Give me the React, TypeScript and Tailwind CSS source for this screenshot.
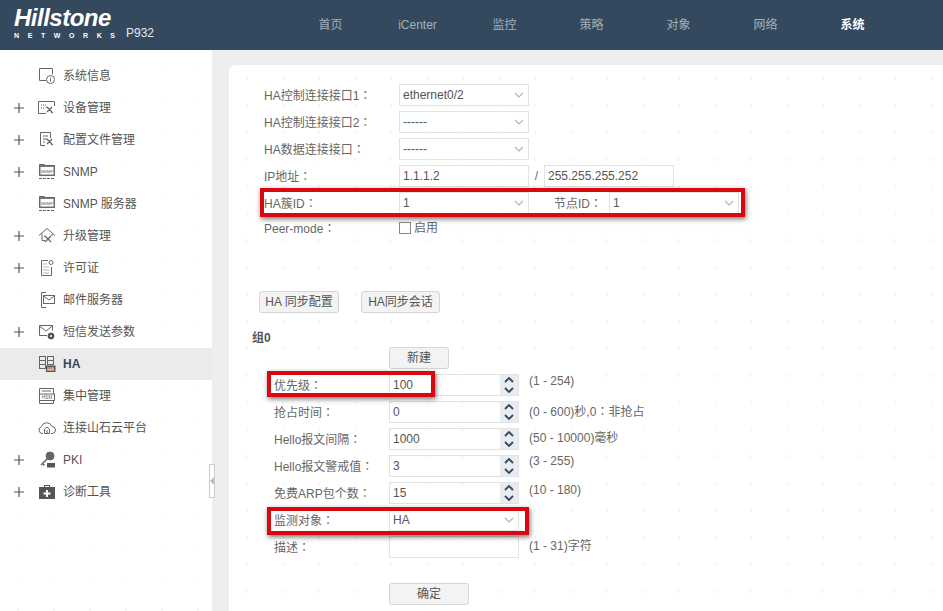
import type { ReactNode } from "react";

const cjk = "font-['Liberation_Sans','Noto_Sans_CJK_SC',sans-serif]";

const Ico = ({ children }: { children: ReactNode }) => (
  <svg width="18" height="18" viewBox="0 0 18 18" fill="none" stroke="#666" strokeWidth="1">
    {children}
  </svg>
);

const Tools = () => (
  <path d="M9 13l5-5M9 8l5 5M8 8l2 1M13 13l2 1" strokeWidth="1.3" />
);

const SnmpIcon = () => (
  <Ico>
    <path d="M1.5 1.500h5l1 1h9v10h-15z" fill="#777" />
    <rect x="2.500" y="4" width="13" height="7.500" fill="#fff" stroke="none" />
    <text x="9" y="9.500" fontSize="4.400" textAnchor="middle" fill="#555" stroke="none" fontFamily="Liberation Sans">
      SNMP
    </text>
    <path d="M1 15.500h16" strokeDasharray="3 1" />
  </Ico>
);

const icons: Record<string, ReactNode> = {
  info: (
    <Ico>
      <path d="M8 13.500H1.500v-12h13v6" />
      <circle cx="12.500" cy="12.500" r="4" />
      <path d="M12.500 11.500v3M12.500 9.800v.8" />
    </Ico>
  ),
  device: (
    <Ico>
      <path d="M16.500 7V2.500h-16v12H8" />
      <path d="M3 6h6M3 9h3" strokeDasharray="1 1" />
      <Tools />
    </Ico>
  ),
  file: (
    <Ico>
      <path d="M7 14.500H2.500v-13h10V7" />
      <path d="M5 5h5M5 8h3M5 11h2" />
      <Tools />
    </Ico>
  ),
  snmp: <SnmpIcon />,
  upgrade: (
    <Ico>
      <path d="M1 8.500L9 1.500l8 7M4 7v6.500h3M14 7v2" />
      <path d="M7 9l6 6M13 9l-6 6M6 9l2 1" strokeWidth="1.300" />
    </Ico>
  ),
  license: (
    <Ico>
      <path d="M10 1.500H3.500v15h10V8" />
      <circle cx="13" cy="3.500" r="2" />
      <path d="M5.500 5h3M5.500 8h5M5.500 11h5M5.500 14h5" strokeDasharray="1 1" />
    </Ico>
  ),
  mail: (
    <Ico>
      <path d="M8 1.500H3.500v15H8" />
      <rect x="5.500" y="4.500" width="11" height="8" />
      <path d="M5.500 5l5.500 4 5.500-4" />
    </Ico>
  ),
  sms: (
    <Ico>
      <path d="M9 12.500H1.500v-10h13v5" />
      <path d="M1.500 3l6.500 5 6.500-5" />
      <circle cx="13" cy="13" r="3" fill="#555" stroke="#555" />
      <circle cx="13" cy="13" r="1" fill="#fff" stroke="none" />
    </Ico>
  ),
  ha: (
    <Ico>
      <rect x="1.500" y="1.500" width="6" height="12" />
      <rect x="9.500" y="1.500" width="6" height="8" />
      <path d="M1.500 5.500h6M1.500 9.500h6M9.500 5.500h6" />
      <rect x="8" y="10.500" width="9.500" height="6.500" fill="#555" stroke="none" />
      <text x="12.700" y="15.700" fontSize="4.800" fontWeight="bold" textAnchor="middle" fill="#fff" stroke="none" fontFamily="Liberation Sans">
        HA
      </text>
    </Ico>
  ),
  hsm: (
    <Ico>
      <path d="M1.500 16.500v-15h14v15z" />
      <path d="M4 4h9" />
      <rect x="1.500" y="7" width="15" height="6.500" fill="#fff" />
      <text x="9" y="12" fontSize="4.800" textAnchor="middle" fill="#666" stroke="none" fontFamily="Liberation Sans">
        HSM
      </text>
    </Ico>
  ),
  cloud: (
    <Ico>
      <path d="M5 14.500H4a3.500 3.500 0 0 1-.5-6.800A5.500 5.500 0 0 1 14 7.500a3.500 3.500 0 0 1 0 7h-1" />
      <path d="M6.500 14.500V10L9 8l2.500 2v4.500zM9 11v3" />
    </Ico>
  ),
  pki: (
    <Ico>
      <circle cx="12" cy="5" r="4" fill="#666" />
      <path d="M9 8l-6 6M4.500 12.500l2 2" strokeWidth="1.500" />
      <rect x="9" y="12" width="8" height="4.500" fill="#555" stroke="none" />
    </Ico>
  ),
  tool: (
    <svg width="18" height="18" viewBox="0 0 18 18">
      <path d="M6 4V2h6v2h5v12H1V4z M7 3v1h4V3z" fill="#555" fillRule="evenodd" />
      <path d="M8 7h2v2.500h2.500v2H10V14H8v-2.500H5.500v-2H8z" fill="#fff" />
    </svg>
  ),
};

const menu: { label: string; icon: string; plus?: boolean; active?: boolean }[] = [
  { label: "系统信息", icon: "info" },
  { label: "设备管理", icon: "device", plus: true },
  { label: "配置文件管理", icon: "file", plus: true },
  { label: "SNMP", icon: "snmp", plus: true },
  { label: "SNMP 服务器", icon: "snmp" },
  { label: "升级管理", icon: "upgrade", plus: true },
  { label: "许可证", icon: "license", plus: true },
  { label: "邮件服务器", icon: "mail" },
  { label: "短信发送参数", icon: "sms", plus: true },
  { label: "HA", icon: "ha", active: true },
  { label: "集中管理", icon: "hsm" },
  { label: "连接山石云平台", icon: "cloud" },
  { label: "PKI", icon: "pki", plus: true },
  { label: "诊断工具", icon: "tool", plus: true },
];

const nav = ["首页", "iCenter", "监控", "策略", "对象", "网络", "系统"];

// the full-width colon sits centred in the TC font, as in the picture
const Txt = ({ s }: { s: string }) => {
  const [a, b] = s.split("：");
  if (b === undefined) return <>{s}</>;
  return (
    <>
      {a}
      <span className="font-['Noto_Sans_CJK_TC',sans-serif]">：</span>
      {b}
    </>
  );
};

const Chevron = () => (
  <svg width="10" height="6" viewBox="0 0 10 6" fill="none" stroke="#b5b5b5" strokeWidth="1.200">
    <path d="M1 1l4 4 4-4" />
  </svg>
);

const Select = ({ value, w = "w-[130px]" }: { value: string; w?: string }) => (
  <div className={`${w} h-[22px] shrink-0 border border-[#e3e3e3] flex items-center justify-between pl-[3px] pr-[4px] text-[#555] bg-white/40`}>
    <span>{value}</span>
    <Chevron />
  </div>
);

const Input = ({ value = "" }: { value?: string }) => (
  <div className="w-[130px] h-[22px] shrink-0 border border-[#e3e3e3] flex items-center pl-[3px] text-[#555] bg-white/40">
    {value}
  </div>
);

const Spinner = ({ value }: { value: string }) => (
  <div className="w-[130px] h-[22px] shrink-0 border border-[#e3e3e3] flex items-center justify-between pl-[3px] text-[#555]">
    <span>{value}</span>
    <div className="w-[18px] h-full flex flex-col bg-[#e8ebf0]">
      {["M1 5l4-4 4 4", "M1 1l4 4 4-4"].map((d) => (
        <div key={d} className="flex-1 flex items-center justify-center">
          <svg width="10" height="6" viewBox="0 0 10 6" fill="none" stroke="#34495e" strokeWidth="1.800">
            <path d={d} />
          </svg>
        </div>
      ))}
    </div>
  </div>
);

const Button = ({ label, w }: { label: string; w: string }) => (
  <div className={`${w} h-[22px] shrink-0 flex items-center justify-center border border-[#d5d5d5] rounded-[3px] bg-[#f3f3f3] text-[#555]`}>
    {label}
  </div>
);

const Row = ({ label, children }: { label: string; children: ReactNode }) => (
  <div className="flex items-center h-[22px] mb-[5px]">
    <div className="w-[135px] shrink-0 text-[#666]">
      <Txt s={label} />
    </div>
    {children}
  </div>
);

const GroupRow = ({ label, hint, hintClass = "", children }: { label: string; hint?: string; hintClass?: string; children: ReactNode }) => (
  <div className="flex items-center h-[22px] mb-[5px]">
    <div className="w-[115px] shrink-0 text-[#666]">
      <Txt s={label} />
    </div>
    {children}
    {hint && (
      <div className={`ml-[10px] text-[#666] ${hintClass}`}>
        <Txt s={hint} />
      </div>
    )}
  </div>
);

const RedBox = ({ className }: { className: string }) => (
  <div className={`absolute border-[4px] border-[#d9080f] shadow-[1px_2px_5px_rgba(0,0,0,0.55)] ${className}`} />
);

export default function App() {
  return (
    <div className={`relative w-[943px] h-[611px] overflow-hidden bg-[#eeeeee] text-[12px] ${cjk}`}>
      {/* Header */}
      <header className="h-[50px] bg-[#34495e] flex items-center">
        <div className="w-[287px] shrink-0 flex pl-[14px] text-white">
          <div className="flex flex-col w-[100px]">
            <span className="font-['Liberation_Sans',sans-serif] italic font-bold text-[24px] leading-[22px] tracking-[-0.5px] mt-[-1px]">
              Hillstone
            </span>
            <span className="text-[7px] leading-[8px] font-bold tracking-[8.600px] mt-[3px] whitespace-nowrap">
              NETWORKS
            </span>
          </div>
          <span className="ml-[12px] mt-[16px] text-[#e4e8ee]">P932</span>
        </div>
        {nav.map((n) => (
          <div
            key={n}
            className={`w-[87px] text-center ${n === "系统" ? "text-white font-bold" : "text-[#a3afbb]"}`}
          >
            {n}
          </div>
        ))}
      </header>

      <div className="flex h-[561px]">
        {/* Sidebar */}
        <aside className="w-[212px] shrink-0 bg-white pt-[10px] bg-[radial-gradient(circle,#f4f4f4_1px,transparent_1.500px)] bg-[size:36px_32px]">
          {menu.map((m) => (
            <div
              key={m.label}
              className={`h-[32px] flex items-center ${m.active ? "bg-[#ebebeb] font-bold text-[#34495e]" : "text-[#555]"}`}
            >
              <div className="w-[38px] shrink-0 flex justify-center">
                {m.plus && (
                  <svg width="10" height="10" viewBox="0 0 10 10" stroke="#555" strokeWidth="1.200">
                    <path d="M0 5h10M5 0v10" />
                  </svg>
                )}
              </div>
              <div className="w-[25px] shrink-0">{icons[m.icon]}</div>
              <span>{m.label}</span>
            </div>
          ))}
        </aside>

        {/* Content */}
        <main className="flex-1 pl-[17px] pt-[15px]">
          <div className="h-full bg-white rounded-tl-[6px] pl-[35px] pt-[19px] bg-[radial-gradient(circle,#f4f4f4_1px,transparent_1.500px)] bg-[size:36px_27px]">
            <Row label="HA控制连接接口1：">
              <Select value="ethernet0/2" />
            </Row>
            <Row label="HA控制连接接口2：">
              <Select value="------" />
            </Row>
            <Row label="HA数据连接接口：">
              <Select value="------" />
            </Row>
            <Row label="IP地址：">
              <Input value="1.1.1.2" />
              <span className="w-[15px] text-center text-[#666]">/</span>
              <Input value="255.255.255.252" />
            </Row>
            <Row label="HA簇ID：">
              <Select value="1" />
              <span className="ml-[25px] w-[55px] text-[#666]">
                <Txt s="节点ID：" />
              </span>
              <Select value="1" />
            </Row>
            <div className="flex items-center h-[18px]">
              <div className="w-[135px] shrink-0 text-[#666]">
                <Txt s="Peer-mode：" />
              </div>
              <span className="w-[12px] h-[12px] border border-[#888] mr-[3px]" />
              <span className="text-[#666]">启用</span>
            </div>

            <div className="flex mt-[54px] ml-[-5px]">
              <Button label="HA 同步配置" w="w-[80px]" />
              <div className="w-[22px]" />
              <Button label="HA同步会话" w="w-[79px]" />
            </div>

            <div className="ml-[-12px] mt-[18px] font-bold text-[#555] leading-[14px]">组0</div>
            <div className="ml-[125px] mt-[2px] mb-[5px]">
              <Button label="新建" w="w-[60px]" />
            </div>

            <div className="ml-[10px]">
              <GroupRow label="优先级：" hint="(1 - 254)" hintClass="-mt-[8px]">
                <Spinner value="100" />
              </GroupRow>
              <GroupRow label="抢占时间：" hint="(0 - 600)秒,0：非抢占" hintClass="-mt-[2px]">
                <Spinner value="0" />
              </GroupRow>
              <GroupRow label="Hello报文间隔：" hint="(50 - 10000)毫秒" hintClass="-mt-[2px]">
                <Spinner value="1000" />
              </GroupRow>
              <GroupRow label="Hello报文警戒值：" hint="(3 - 255)" hintClass="-mt-[10px]">
                <Spinner value="3" />
              </GroupRow>
              <GroupRow label="免费ARP包个数：" hint="(10 - 180)" hintClass="-mt-[6px]">
                <Spinner value="15" />
              </GroupRow>
              <GroupRow label="监测对象：">
                <Select value="HA" />
              </GroupRow>
              <GroupRow label="描述：" hint="(1 - 31)字符" hintClass="-mt-[2px]">
                <Input />
              </GroupRow>
            </div>

            <div className="ml-[125px] mt-[25px]">
              <Button label="确定" w="w-[80px]" />
            </div>
          </div>
        </main>
      </div>

      {/* Collapse handle */}
      <div className="absolute left-[209px] top-[464px] w-[6px] h-[34px] bg-white border border-[#ccc] flex items-center justify-center">
        <span className="w-0 h-0 border-y-[4px] border-y-transparent border-r-[4px] border-r-[#bbb]" />
      </div>

      {/* Red annotations */}
      <RedBox className="left-[260px] top-[188px] w-[485px] h-[29px]" />
      <RedBox className="left-[267px] top-[371px] w-[168px] h-[26px]" />
      <RedBox className="left-[267px] top-[507px] w-[262px] h-[28px]" />
    </div>
  );
}
